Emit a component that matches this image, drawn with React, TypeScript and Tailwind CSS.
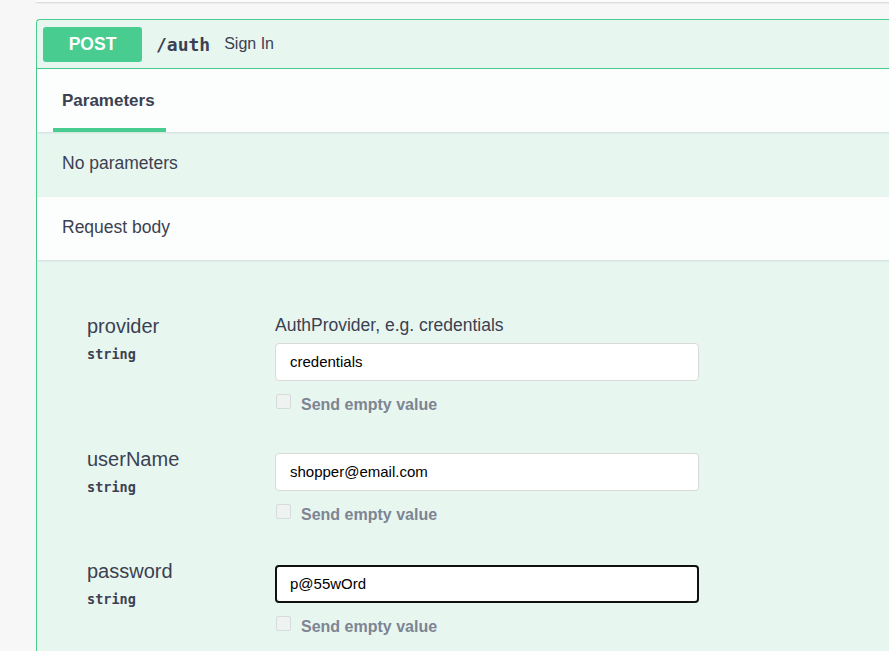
export default function App() {
  const fields = [
    { name: "provider", desc: "AuthProvider, e.g. credentials", value: "credentials", focus: false },
    { name: "userName", desc: "", value: "shopper@email.com", focus: false },
    { name: "password", desc: "", value: "p@55wOrd", focus: true },
  ];

  return (
    <div className="h-[651px] w-[889px] overflow-hidden bg-[#f7f7f7] pl-[36px] font-['Liberation_Sans',Arial,sans-serif] text-[#3b4151]">
      <div className="h-[2px] w-[900px] bg-[#fcfbfc] shadow-[0_1px_2px_rgba(0,0,0,0.15)]" />

      <div className="mt-[17px] w-[900px] rounded-tl-[4px] border border-r-0 border-b-0 border-[#49cc90] bg-[#e8f6f0]">
        {/* summary */}
        <div className="flex h-[49px] items-center border-b border-[#49cc90] pl-[6px]">
          <div className="flex h-[35px] w-[99px] items-center justify-center rounded-[3px] bg-[#49cc90] text-[17.5px] font-bold text-white">
            POST
          </div>
          <span className="ml-[14px] font-['DejaVu_Sans_Mono',monospace] text-[18px] font-bold">/auth</span>
          <span className="ml-[14px] text-[16px]">Sign In</span>
        </div>

        {/* tabs */}
        <div className="flex h-[63px] items-end bg-[#fcfefd] pl-[16px] shadow-[0_1px_2px_rgba(0,0,0,0.1)]">
          <div className="flex h-[63px] flex-col justify-end">
            <div className="px-[9px] pb-[15px] text-[17px] font-bold">Parameters</div>
            <div className="h-[4px] w-[113px] bg-[#49cc90]" />
          </div>
        </div>

        <div className="flex h-[65px] items-center pb-[3px] pl-[25px] text-[17.5px]">No parameters</div>

        <div className="flex h-[63px] items-center bg-[#fcfefd] pb-[2px] pl-[25px] text-[17.5px] shadow-[0_1px_2px_rgba(0,0,0,0.1)]">
          Request body
        </div>

        {/* body */}
        <div className="pt-[55px]">
          {fields.map((f) => (
            <div key={f.name} className={f.desc ? "flex pb-[37px] pl-[50px]" : "flex pb-[39px] pl-[50px]"}>
              <div className="w-[188px]">
                <div className="h-[22px] text-[20px] leading-[22px]">{f.name}</div>
                <div className="mt-[7px] font-['DejaVu_Sans_Mono',monospace] text-[13.5px] font-bold">string</div>
              </div>
              <div className="flex w-[424px] flex-col">
                {f.desc && <div className="h-[23px] text-[17.5px] leading-[20px]">{f.desc}</div>}
                <div
                  className={
                    f.focus
                      ? "mt-[5px] flex h-[38px] items-center rounded-[4px] border-2 border-[#111] bg-white pl-[13px] text-[15px] text-black"
                      : "mt-[5px] flex h-[38px] items-center rounded-[4px] border border-[#d9d9d9] bg-white pl-[14px] text-[15px] text-black"
                  }
                >
                  {f.value}
                </div>
                <div className="mt-[10px] flex h-[20px] items-center">
                  <div className="ml-[1px] h-[15px] w-[15px] rounded-[2px] border border-[#d5dcd9] bg-[#eef3f1]" />
                  <span className="ml-[10px] mt-[8px] text-[16px] font-bold text-[#7d8492]">Send empty value</span>
                </div>
              </div>
            </div>
          ))}
        </div>
      </div>
    </div>
  );
}
